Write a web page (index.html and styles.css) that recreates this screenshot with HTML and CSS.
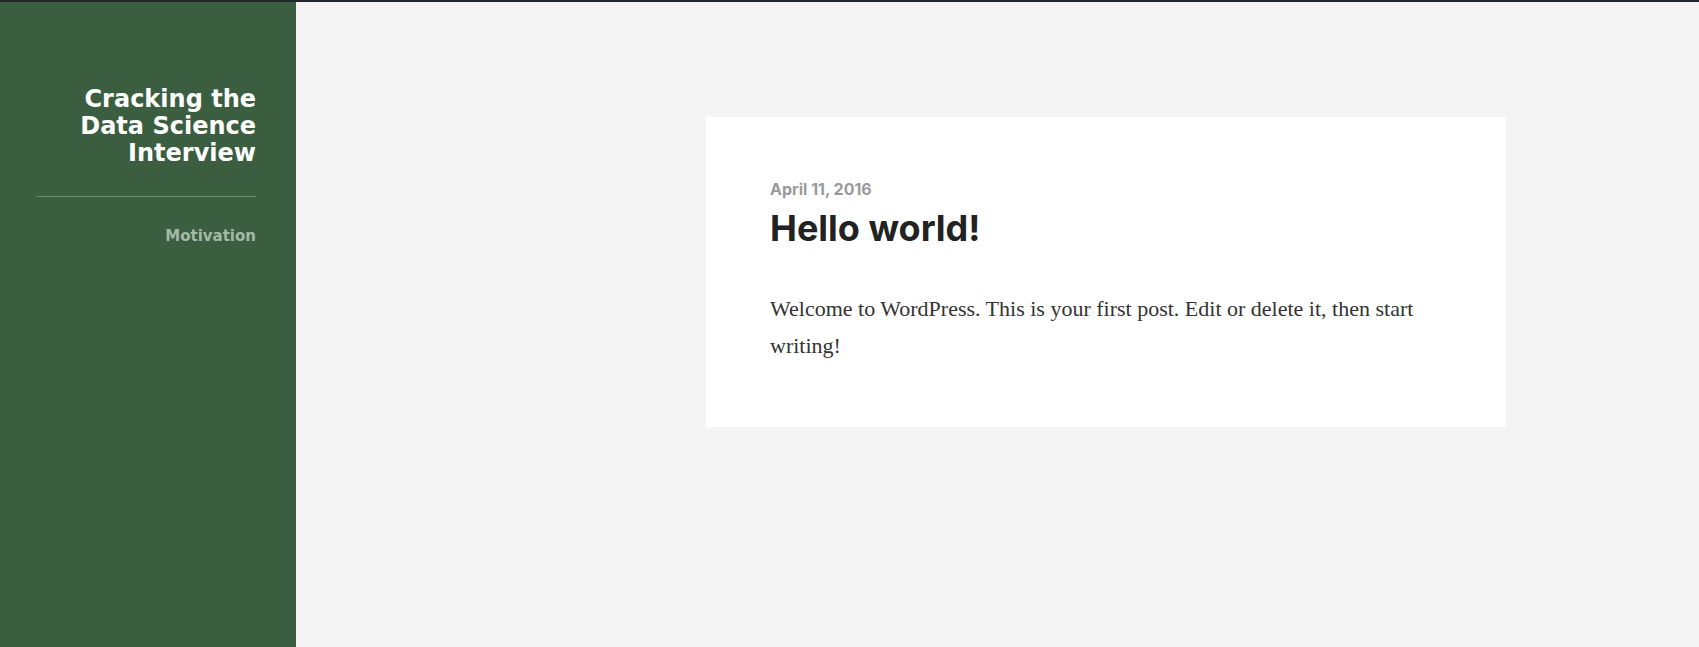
FILE: index.html
```html
<!DOCTYPE html>
<html lang="en">
<head>
<meta charset="utf-8">
<title>Cracking the Data Science Interview</title>
<link rel="stylesheet" href="styles.css">
</head>
<body>
<div class="topbar"></div>
<div class="page">
  <aside class="sidebar">
    <h1 class="site-title">Cracking the Data Science Interview</h1>
    <hr class="divider">
    <nav class="menu">
      <a class="menu-item" href="#">Motivation</a>
    </nav>
  </aside>
  <main class="content">
    <article class="post">
      <div class="post-date">April 11, 2016</div>
      <h2 class="post-title">Hello world!</h2>
      <p class="post-body">Welcome to WordPress. This is your first post. Edit or delete it, then start writing!</p>
    </article>
  </main>
</div>
</body>
</html>
```
FILE: styles.css
```css
* { box-sizing: border-box; }
html, body { margin: 0; padding: 0; height: 100%; }
body {
  background: #f4f4f4;
  display: flex;
  flex-direction: column;
  overflow: hidden;
}
.topbar {
  height: 2px;
  background: #23282d;
  flex: none;
}
.page {
  flex: 1;
  display: flex;
}
.sidebar {
  width: 296px;
  flex: none;
  background: #3b5e41;
  padding: 84px 40px 0 36px;
  text-align: right;
}
.site-title {
  margin: 0;
  font-family: "DejaVu Sans", sans-serif;
  font-weight: bold;
  font-size: 24px;
  line-height: 27px;
  color: #ffffff;
}
.divider {
  border: 0;
  height: 1px;
  background: #6c8a71;
  margin: 29px 0 0 0;
}
.menu {
  margin-top: 29px;
}
.menu-item {
  font-family: "DejaVu Sans", sans-serif;
  font-weight: bold;
  font-size: 15px;
  line-height: 20px;
  color: #a4b9a7;
  text-decoration: none;
}
.content {
  flex: 1;
  padding: 115px 0 0 410px;
}
.post {
  width: 800px;
  background: #ffffff;
  padding: 62px 64px 63px 64px;
}
.post-date {
  font-family: "Inter", sans-serif;
  font-weight: bold;
  font-size: 16px;
  line-height: 20px;
  color: #9a9a9a;
}
.post-title {
  margin: 7px 0 0 0;
  font-family: "Inter", sans-serif;
  font-weight: bold;
  font-size: 36px;
  line-height: 44px;
  color: #222222;
}
.post-body {
  margin: 40px 0 0 0;
  font-family: "Liberation Serif", serif;
  font-size: 22px;
  line-height: 37px;
  color: #333333;
}
```
